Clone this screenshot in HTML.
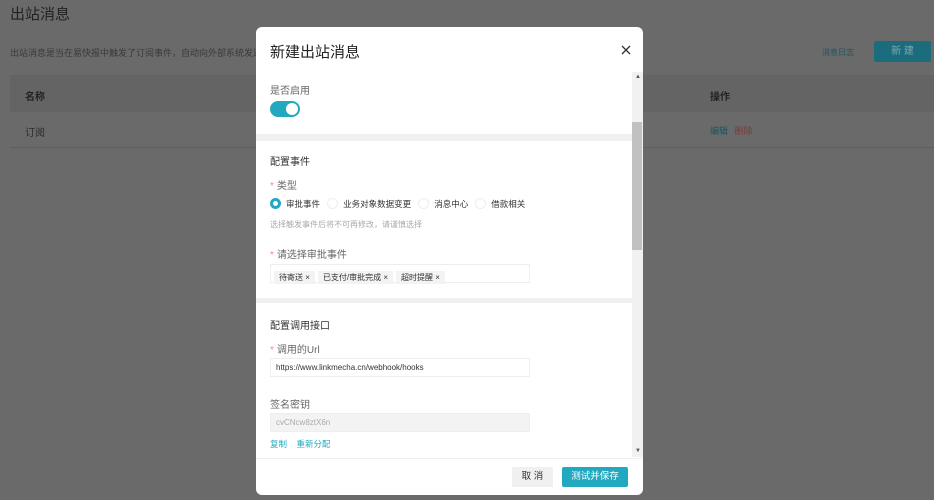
<!DOCTYPE html>
<html><head><meta charset="utf-8"><style>
*{margin:0;padding:0;box-sizing:border-box}
body{width:934px;height:500px;background:#6a6a6a;font-family:"Liberation Sans","Noto Sans CJK SC",sans-serif;position:relative;overflow:hidden;color:#333}
.a{position:absolute;white-space:nowrap}
.m{position:absolute;left:256px;top:27px;width:387px;height:468px;background:#fff;border-radius:6px;overflow:hidden}
.lbl{font-size:10px;color:#666}
.star{color:#f08a8a;margin-right:3px}
.radio{display:inline-block;width:11px;height:11px;border-radius:50%;border:1px solid #eee;vertical-align:-2px;margin-right:5px}
.tag{display:inline-block;background:#f3f3f3;font-size:8px;padding:1px 5px;margin-right:3px;color:#333;line-height:11px}
</style></head><body>
<div class="a" style="left:10px;top:3px;font-size:15px;color:#222">出站消息</div>
<div class="a" style="left:10px;top:46px;font-size:9px;color:#3a3a3a">出站消息是当在易快报中触发了订阅事件，自动向外部系统发送</div>
<div class="a" style="left:822px;top:47px;font-size:8px;color:#1a5560">消息日志</div>
<div class="a" style="left:874px;top:41px;width:57px;height:21px;background:#1b6c7c;border-radius:2px;color:#7fa8b0;font-size:10px;text-align:center;line-height:21px">新 建</div>
<div class="a" style="left:10px;top:75px;width:924px;height:37px;background:#646464"></div>
<div class="a" style="left:25px;top:88px;font-size:10px;font-weight:bold;color:#222">名称</div>
<div class="a" style="left:710px;top:88px;font-size:10px;font-weight:bold;color:#222">操作</div>
<div class="a" style="left:25px;top:124px;font-size:10px;color:#2a2a2a">订阅</div>
<div class="a" style="left:710px;top:124px;font-size:9px;color:#1a5560">编辑 <span style="color:#7a3c3c;margin-left:4px">删除</span></div>
<div class="a" style="left:10px;top:147px;width:924px;height:1px;background:#5e5e5e"></div>

<div class="m">
 <div class="a" style="left:14px;top:14px;font-size:15px;color:#222">新建出站消息</div>
 <svg class="a" style="left:365px;top:18px" width="10" height="10" viewBox="0 0 10 10"><path d="M1 1L9 9M9 1L1 9" stroke="#333" stroke-width="1.3"/></svg>
 <div class="a" style="left:376px;top:45px;width:11px;height:385px;background:#f1f1f1"></div>
 <div class="a" style="left:376px;top:95px;width:10px;height:128px;background:#c1c1c1"></div>
 <div class="a" style="left:379px;top:47px;font-size:6px;color:#555">▲</div>
 <div class="a" style="left:379px;top:421px;font-size:6px;color:#555">▼</div>
 <div class="a lbl" style="left:14px;top:55px">是否启用</div>
 <div class="a" style="left:14px;top:74px;width:30px;height:16px;border-radius:8px;background:#22a9bf"><div style="position:absolute;right:2px;top:2px;width:12px;height:12px;border-radius:50%;background:#fff"></div></div>
 <div class="a" style="left:0;top:107px;width:376px;height:7px;background:#f0f0f0"></div>
 <div class="a" style="left:14px;top:126px;font-size:10px;color:#333">配置事件</div>
 <div class="a lbl" style="left:14px;top:150px"><span class="star">*</span>类型</div>
 <div class="a" style="left:14px;top:171px;font-size:8.5px;color:#333"><span class="radio" style="border:3px solid #22a9bf"></span>审批事件&nbsp;&nbsp;&nbsp;<span class="radio"></span>业务对象数据变更&nbsp;&nbsp;&nbsp;<span class="radio"></span>消息中心&nbsp;&nbsp;&nbsp;<span class="radio"></span>借款相关</div>
 <div class="a" style="left:14px;top:192px;font-size:8px;color:#aaa">选择触发事件后将不可再修改，请谨慎选择</div>
 <div class="a lbl" style="left:14px;top:219px"><span class="star">*</span>请选择审批事件</div>
 <div class="a" style="left:14px;top:237px;width:260px;height:19px;border:1px solid #eee;padding:2px 3px"><span class="tag">待寄送 ×</span><span class="tag">已支付/审批完成 ×</span><span class="tag">超时提醒 ×</span></div>
 <div class="a" style="left:0;top:271px;width:376px;height:5px;background:#f0f0f0"></div>
 <div class="a" style="left:14px;top:290px;font-size:10px;color:#333">配置调用接口</div>
 <div class="a lbl" style="left:14px;top:314px"><span class="star">*</span>调用的Url</div>
 <div class="a" style="left:14px;top:331px;width:260px;height:19px;border:1px solid #eee;font-size:8px;padding:4px 5px;color:#333">https://www.linkmecha.cn/webhook/hooks</div>
 <div class="a" style="left:14px;top:369px;font-size:10px;color:#666">签名密钥</div>
 <div class="a" style="left:14px;top:386px;width:260px;height:19px;background:#f3f3f3;border:1px solid #eee;font-size:8px;padding:4px 5px;color:#aaa">cvCNcw8ztX6n</div>
 <div class="a" style="left:14px;top:411px;font-size:8.5px;color:#22a9bf">复制&nbsp;&nbsp;&nbsp;&nbsp;重新分配</div>
 <div class="a" style="left:0;top:431px;width:387px;height:1px;background:#eee"></div>
 <div class="a" style="left:256px;top:440px;width:41px;height:20px;background:#f0f0f0;font-size:9.5px;text-align:center;line-height:20px;color:#333">取 消</div>
 <div class="a" style="left:306px;top:440px;width:66px;height:20px;background:#22a9bf;border-radius:2px;font-size:9.5px;text-align:center;line-height:20px;color:#fff">测试并保存</div>
</div>
</body></html>
